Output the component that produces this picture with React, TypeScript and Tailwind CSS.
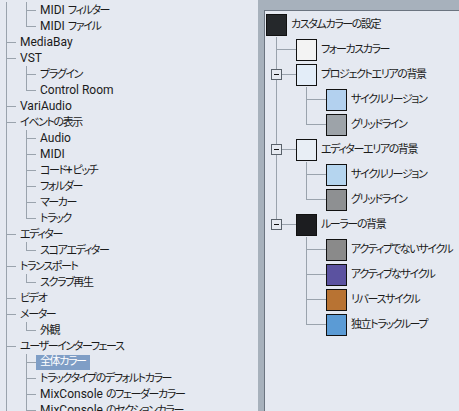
import React from 'react';

const LINE = '#9aa3ad';

type LeftRow = { label: string; level: 1 | 2; last?: boolean; selected?: boolean };

const LEFT: LeftRow[] = [
  { label: 'MIDI フィルター', level: 2 },
  { label: 'MIDI ファイル', level: 2, last: true },
  { label: 'MediaBay', level: 1 },
  { label: 'VST', level: 1 },
  { label: 'プラグイン', level: 2 },
  { label: 'Control Room', level: 2, last: true },
  { label: 'VariAudio', level: 1 },
  { label: 'イベントの表示', level: 1 },
  { label: 'Audio', level: 2 },
  { label: 'MIDI', level: 2 },
  { label: 'コード+ピッチ', level: 2 },
  { label: 'フォルダー', level: 2 },
  { label: 'マーカー', level: 2 },
  { label: 'トラック', level: 2, last: true },
  { label: 'エディター', level: 1 },
  { label: 'スコアエディター', level: 2, last: true },
  { label: 'トランスポート', level: 1 },
  { label: 'スクラブ再生', level: 2, last: true },
  { label: 'ビデオ', level: 1 },
  { label: 'メーター', level: 1 },
  { label: '外観', level: 2, last: true },
  { label: 'ユーザーインターフェース', level: 1 },
  { label: '全体カラー', level: 2, selected: true },
  { label: 'トラックタイプのデフォルトカラー', level: 2 },
  { label: 'MixConsole のフェーダーカラー', level: 2 },
  { label: 'MixConsole のセクションカラー', level: 2 },
];

type RightRow = {
  label: string;
  color: string;
  level: 0 | 1 | 2;
  last?: boolean;
  box?: boolean;
  trunk?: boolean; // root line still runs past this child row
};

const RIGHT: RightRow[] = [
  { label: 'カスタムカラーの設定', color: '#25282b', level: 0 },
  { label: 'フォーカスカラー', color: '#f3f3f3', level: 1 },
  { label: 'プロジェクトエリアの背景', color: '#e3edf8', level: 1, box: true },
  { label: 'サイクルリージョン', color: '#b3d1ef', level: 2, trunk: true },
  { label: 'グリッドライン', color: '#9da3a9', level: 2, last: true, trunk: true },
  { label: 'エディターエリアの背景', color: '#e8eef5', level: 1, box: true },
  { label: 'サイクルリージョン', color: '#b5d5ef', level: 2, trunk: true },
  { label: 'グリッドライン', color: '#8e9092', level: 2, last: true, trunk: true },
  { label: 'ルーラーの背景', color: '#1c1d20', level: 1, box: true, last: true },
  { label: 'アクティブでないサイクル', color: '#8a8a8a', level: 2 },
  { label: 'アクティブなサイクル', color: '#5b52a0', level: 2 },
  { label: 'リバースサイクル', color: '#b87333', level: 2 },
  { label: '独立トラックループ', color: '#5b9bd5', level: 2, last: true },
];

// Japanese runs are set tighter so the kana come out as narrow as the UI font's
const CJK = /([\u3000-\u30ff\u3400-\u9fff\uff00-\uffef]+)/;

function Label({ text }: { text: string }) {
  return (
    <>
      {text.split(CJK).map((part, i) =>
        i % 2 === 1 ? (
          <span key={i} className="text-[11px] tracking-[-1.4px]">
            {part}
          </span>
        ) : (
          part
        ),
      )}
    </>
  );
}

function LeftLines({ row }: { row: LeftRow }) {
  if (row.level === 1) {
    return (
      <svg width={16} height={16} className="shrink-0" shapeRendering="crispEdges">
        <line x1={6.5} y1={0} x2={6.5} y2={16} stroke={LINE} />
        <line x1={6} y1={8.5} x2={16} y2={8.5} stroke={LINE} />
      </svg>
    );
  }
  return (
    <svg width={36} height={16} className="shrink-0" shapeRendering="crispEdges">
      <line x1={6.5} y1={0} x2={6.5} y2={16} stroke={LINE} />
      <line x1={26.5} y1={0} x2={26.5} y2={row.last ? 9 : 16} stroke={LINE} />
      <line x1={26} y1={8.5} x2={36} y2={8.5} stroke={LINE} />
    </svg>
  );
}

function RightLines({ row }: { row: RightRow }) {
  if (row.level === 1) {
    return (
      <svg width={30} height={25} className="shrink-0" shapeRendering="crispEdges">
        <line x1={10.5} y1={0} x2={10.5} y2={row.last ? 13 : 25} stroke={LINE} />
        <line x1={10} y1={12.5} x2={30} y2={12.5} stroke={LINE} />
        {row.box && (
          <>
            <rect x={5.5} y={7.5} width={10} height={10} fill="#e6eaf1" stroke="#59616a" />
            <line x1={8} y1={12.5} x2={13} y2={12.5} stroke="#111" />
          </>
        )}
      </svg>
    );
  }
  return (
    <svg width={60} height={25} className="shrink-0" shapeRendering="crispEdges">
      {row.trunk && <line x1={10.5} y1={0} x2={10.5} y2={25} stroke={LINE} />}
      <line x1={40.5} y1={0} x2={40.5} y2={row.last ? 13 : 25} stroke={LINE} />
      <line x1={40} y1={12.5} x2={60} y2={12.5} stroke={LINE} />
    </svg>
  );
}

export default function App() {
  return (
    <div className="flex h-[411px] w-[459px] overflow-hidden bg-[#a7b1bc] font-['Segoe_UI','Roboto','Noto_Sans_CJK_JP',sans-serif] text-[12px] text-[#1b1b1b] [font-feature-settings:'palt']">
      {/* settings tree */}
      <div className="w-[258px] shrink-0 bg-[#e5e9f1] pt-[2px]">
        {LEFT.map((row, i) => (
          <div key={i} className="flex h-[16px] items-center whitespace-nowrap">
            <LeftLines row={row} />
            <span
              className={
                row.selected
                  ? 'flex h-[15px] items-center bg-[#7f9ec6] px-[4px] text-white'
                  : 'px-[4px] leading-[16px]'
              }
            >
              <Label text={row.label} />
            </span>
          </div>
        ))}
      </div>

      {/* colour tree */}
      <div className="min-w-0 flex-1 pl-[6px] pt-[10px]">
        <div className="h-full border-l border-t border-[#6b7480] bg-[#e5e9f1] pl-[1px] pt-[1px]">
          {RIGHT.map((row, i) => (
            <div key={i} className="flex h-[25px] items-center whitespace-nowrap">
              {row.level > 0 && <RightLines row={row} />}
              <div
                className="h-[22px] w-[21px] shrink-0 border border-[#111]"
                style={{ backgroundColor: row.color }}
              />
              <span className="ml-[4px]">
                <Label text={row.label} />
              </span>
            </div>
          ))}
        </div>
      </div>
    </div>
  );
}
